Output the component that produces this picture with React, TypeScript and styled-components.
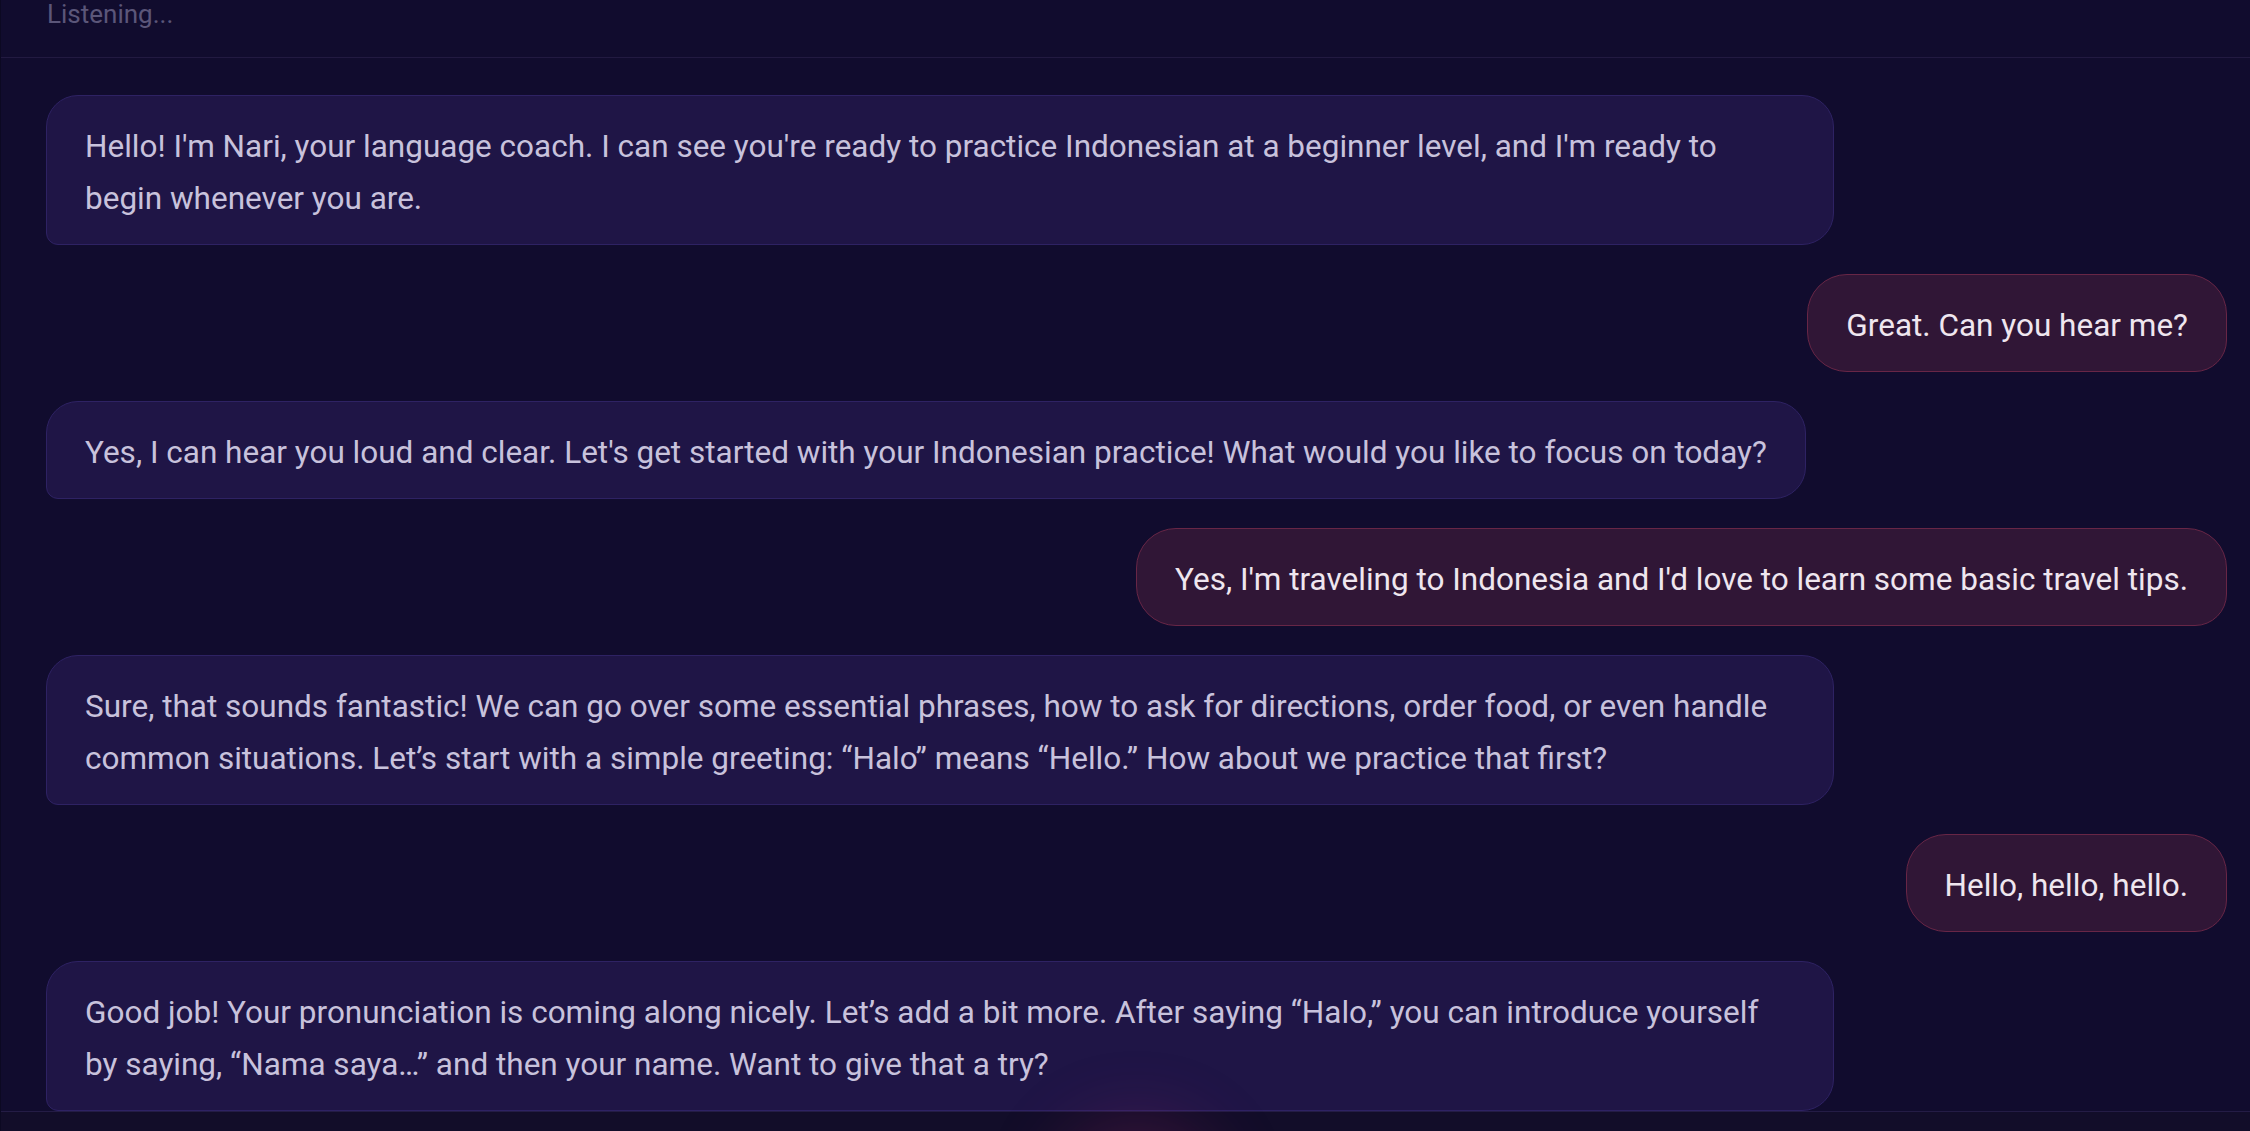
import React from 'react';
import styled, {createGlobalStyle} from 'styled-components';

const GlobalStyle = createGlobalStyle`
  html, body {
    margin: 0;
    padding: 0;
    background: #110c2e;
  }
  body {
    font-family: Roboto, "Noto Sans", sans-serif;
  }
  * { box-sizing: border-box; }
`;

const Shell = styled.div`
  height: 1131px;
  overflow: hidden;
  display: flex;
  flex-direction: column;
  background: #110c2e;
  border-left: 1px solid #0c0922;
`;

const Header = styled.header`
  flex: none;
  height: 58px;
  padding-left: 46px;
  border-bottom: 1px solid #221a41;
`;

const Status = styled.div`
  font-size: 26px;
  line-height: 26px;
  margin-top: 1px;
  color: #5b5679;
`;

const Chat = styled.main`
  flex: none;
  height: 1053px;
  padding: 37px 23px 0 45px;
  display: flex;
  flex-direction: column;
  gap: 29px;
  overflow: hidden;
`;

const Bubble = styled.div<{ $user?: boolean }>`
  flex: none;
  max-width: 1788px;
  padding: 25px 38px 19px;
  font-size: 31.5px;
  line-height: 52px;
  border: 1px solid ${p => (p.$user ? '#682646' : '#2e2263')};
  background: ${p => (p.$user ? '#301636' : '#1f1546')};
  color: ${p => (p.$user ? '#efe6ef' : '#c8c2dc')};
  align-self: ${p => (p.$user ? 'flex-end' : 'flex-start')};
  border-radius: ${p => (p.$user ? '40px 40px 32px 40px' : '32px 32px 32px 12px')};
`;

const Footer = styled.footer`
  flex: none;
  height: 220px;
  border-top: 1px solid #241c45;
  background: #120d29;
  display: flex;
  justify-content: center;
  padding: 44px 23px 0 45px;
`;

const Orb = styled.div`
  width: 96px;
  height: 96px;
  border-radius: 50%;
  background: #3d1a4a;
  box-shadow: 0 0 70px 36px rgba(160, 40, 105, 0.28);
`;

type Message = { user?: boolean; text: string };

const messages: Message[] = [
  {text: "Hello! I'm Nari, your language coach. I can see you're ready to practice Indonesian at a beginner level, and I'm ready to begin whenever you are."},
  {user: true, text: 'Great. Can you hear me?'},
  {text: "Yes, I can hear you loud and clear. Let's get started with your Indonesian practice! What would you like to focus on today?"},
  {user: true, text: "Yes, I'm traveling to Indonesia and I'd love to learn some basic travel tips."},
  {text: 'Sure, that sounds fantastic! We can go over some essential phrases, how to ask for directions, order food, or even handle common situations. Let’s start with a simple greeting: “Halo” means “Hello.” How about we practice that first?'},
  {user: true, text: 'Hello, hello, hello.'},
  {text: 'Good job! Your pronunciation is coming along nicely. Let’s add a bit more. After saying “Halo,” you can introduce yourself by saying, “Nama saya…” and then your name. Want to give that a try?'},
];

export default function App() {
  return (
    <Shell>
      <GlobalStyle/>
      <Header>
        <Status>Listening...</Status>
      </Header>
      <Chat>
        {messages.map((m, i) => (
          <Bubble key={i} $user={m.user}>{m.text}</Bubble>
        ))}
      </Chat>
      <Footer>
        <Orb/>
      </Footer>
    </Shell>
  );
}
